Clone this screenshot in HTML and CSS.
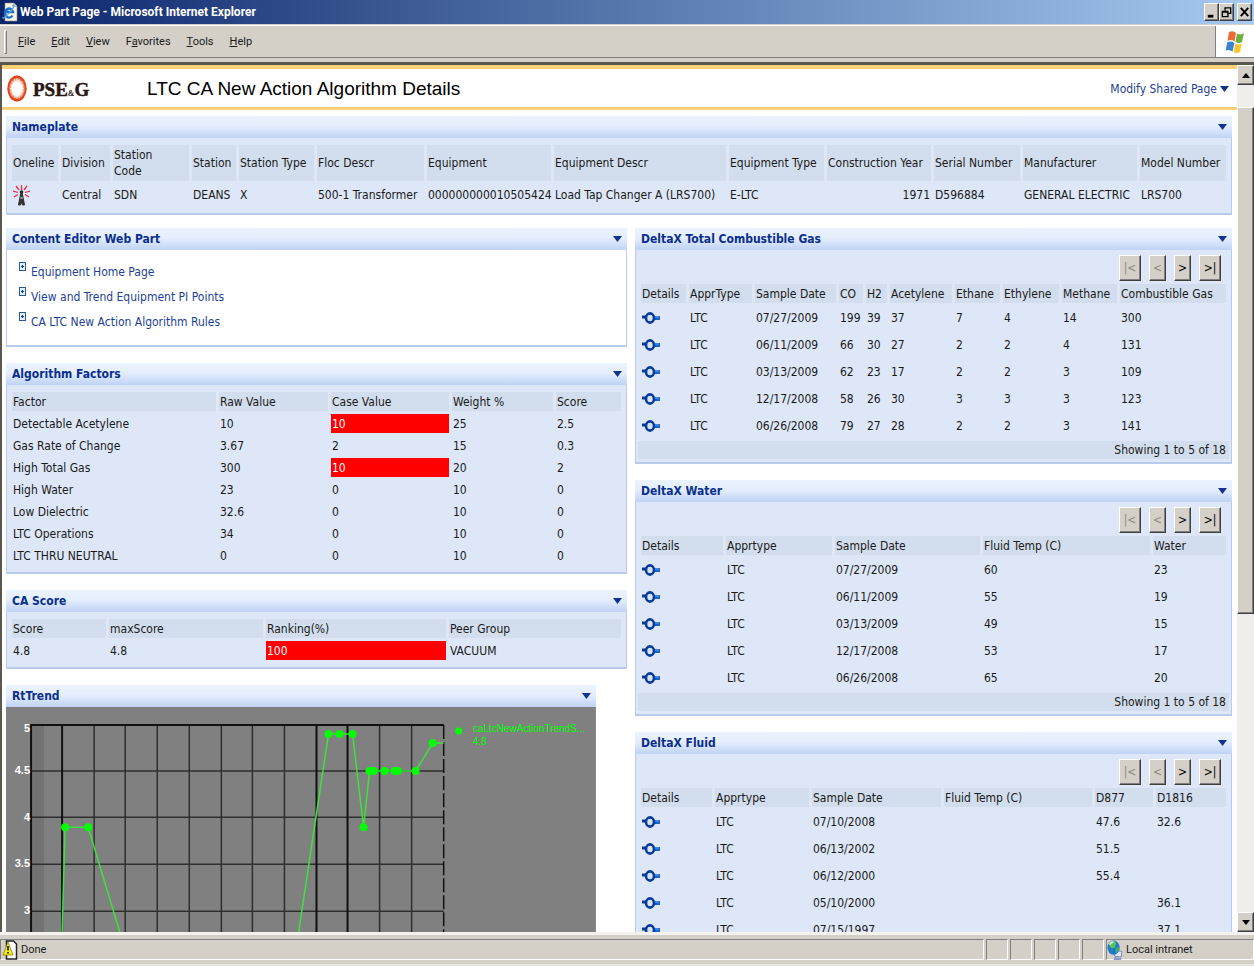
FILE: index.html
```html
<!DOCTYPE html>
<html lang="en">
<head>
<meta charset="utf-8">
<title>Web Part Page - Microsoft Internet Explorer</title>
<link rel="stylesheet" href="styles.css">
</head>
<body>
<svg class="defs" aria-hidden="true">
  <symbol id="plug" viewBox="0 0 18 14">
    <path d="M0 6h4" stroke="#0a3a98" stroke-width="3"/>
    <path d="M12 7h6" stroke="#1c62c8" stroke-width="4"/>
    <ellipse cx="8" cy="7" rx="4" ry="4.600" fill="#d3e4fb" stroke="#0a3a98" stroke-width="2.600"/>
    <path d="M13 6h4" stroke="#6aa6ee" stroke-width="1"/>
  </symbol>
  <symbol id="bullet" viewBox="0 0 7 9">
    <rect x=".5" y=".5" width="6" height="8" fill="#e6f1fb" stroke="#2a5a94"/>
    <path d="M2 4.500h3M3.500 3v3" stroke="#123f86" stroke-width="1.200"/>
  </symbol>
</svg>

<header class="titlebar">
  <svg class="titlebar-icon" viewBox="0 0 16 20" aria-hidden="true">
    <path d="M3 1h9l3 3v15H3z" fill="#f7f5e6" stroke="#8c8c80" stroke-width=".6"/>
    <path d="M12 1v3h3" fill="none" stroke="#8c8c80" stroke-width=".8"/>
    <path d="M10.500 13.500A4 4.500 0 1 1 11 10H3.500" fill="none" stroke="#1c6fd0" stroke-width="2.400"/>
    <path d="M1 15C0 18 5 14 9 9s4-7 1-5" fill="none" stroke="#4fb0ee" stroke-width="1.200"/>
  </svg>
  <h1 class="titlebar-text">Web Part Page - Microsoft Internet Explorer</h1>
  <div class="window-buttons">
    <button class="win-btn" aria-label="Minimize"><svg viewBox="0 0 14 17"><path d="M3 13h6" stroke="#000" stroke-width="3"/></svg></button>
    <button class="win-btn" aria-label="Restore"><svg viewBox="0 0 14 17"><path d="M5.500 7V4h6v6H9M5 4h7M2.500 8.500h6v5h-6zM2 8h7" fill="none" stroke="#000" stroke-width="1.500"/></svg></button>
    <button class="win-btn win-close" aria-label="Close"><svg viewBox="0 0 14 17"><path d="M3 4l8 9M11 4l-8 9" stroke="#000" stroke-width="2"/></svg></button>
  </div>
</header>

<nav class="menubar">
  <span class="grip"></span>
  <button class="menu"><u>F</u>ile</button>
  <button class="menu"><u>E</u>dit</button>
  <button class="menu"><u>V</u>iew</button>
  <button class="menu">F<u>a</u>vorites</button>
  <button class="menu"><u>T</u>ools</button>
  <button class="menu"><u>H</u>elp</button>
  <span class="throbber">
    <svg viewBox="0 0 20 24" aria-hidden="true">
      <path d="M4 2q4-2 7 1L9.500 11.500Q6 9 2.500 11z" fill="#ee6a35"/>
      <path d="M12 3.500q4 2 7-.5L17 12q-3.500 2-6.500 0z" fill="#6cb33e"/>
      <path d="M2.300 12.200Q6 10.500 9.300 13L7.700 21.500Q4 19 .500 20.500z" fill="#3b82d0"/>
      <path d="M10.300 13.500q3 2 6.500 0L15 22q-3.500 2-6.300 0z" fill="#f8c52c"/>
    </svg>
  </span>
</nav>

<div class="viewport">
  <div class="page">
    <div class="masthead">
      <svg class="logo" viewBox="0 0 86 32" role="img" aria-label="PSE&amp;G">
        <defs>
          <radialGradient id="sun">
            <stop offset="0" stop-color="#fff"/>
            <stop offset=".5" stop-color="#fff"/>
            <stop offset=".75" stop-color="#f0835e"/>
            <stop offset=".85" stop-color="#e2481f"/>
            <stop offset="1" stop-color="#dc3c14"/>
          </radialGradient>
        </defs>
        <ellipse cx="10" cy="15.500" rx="9.700" ry="13" fill="url(#sun)"/>
        <path d="M10 5v21M3 15.500h14M5 8.500l10 14M15 8.500l-10 14M7.500 6l5 19M12.500 6l-5 19M3.500 12l13 7M16.500 12l-13 7" stroke="#fff" stroke-width=".9" stroke-opacity=".8"/>
        <text x="26" y="23" class="logo-text">PSE<tspan class="logo-amp">&amp;</tspan>G</text>
      </svg>
      <h2 class="page-title">LTC CA New Action Algorithm Details</h2>
      <a class="modify" href="#">Modify Shared Page <span class="caret"></span></a>
    </div>

    <main class="zones">
      <section class="part">
        <div class="part-head"><h3>Nameplate</h3><button class="caret" aria-label="Nameplate menu"></button></div>
        <div class="part-body">
          <table class="grid nameplate">
            <thead><tr><th>Oneline</th><th>Division</th><th>Station Code</th><th>Station</th><th>Station Type</th><th>Floc Descr</th><th>Equipment</th><th>Equipment Descr</th><th>Equipment Type</th><th>Construction Year</th><th>Serial Number</th><th>Manufacturer</th><th>Model Number</th></tr></thead>
            <tbody><tr>
              <td><a href="#" aria-label="Oneline"><svg class="tower" viewBox="0 0 17 22">
                <path d="M8.500 6V1M6 6L3 2M11 6l3-4M5 8.500L0 7M12 8.500L17 7M5 10.500L1 13M12 10.500l4 2.500" stroke="#e0304a" stroke-width="1.300"/>
                <circle cx="8.500" cy="8" r="1.800" fill="#222"/>
                <path d="M8 8h1L11.500 21h-2l-1-3-1 3h-2z" fill="#333" stroke="#333"/>
                <path d="M7.500 13l2 2M9.500 13l-2 2" stroke="#ddd" stroke-width=".8"/>
              </svg></a></td>
              <td>Central</td><td>SDN</td><td>DEANS</td><td>X</td><td>500-1 Transformer</td><td>000000000010505424</td><td>Load Tap Changer A (LRS700)</td><td>E-LTC</td><td class="num">1971</td><td>D596884</td><td>GENERAL ELECTRIC</td><td>LRS700</td>
            </tr></tbody>
          </table>
        </div>
      </section>

      <div class="columns">
        <div class="col-left">
          <section class="part">
            <div class="part-head"><h3>Content Editor Web Part</h3><button class="caret" aria-label="Content Editor menu"></button></div>
            <div class="part-body plain">
              <ul class="links">
                <li><svg class="bullet"><use href="#bullet"/></svg><a href="#">Equipment Home Page</a></li>
                <li><svg class="bullet"><use href="#bullet"/></svg><a href="#">View and Trend Equipment PI Points</a></li>
                <li><svg class="bullet"><use href="#bullet"/></svg><a href="#">CA LTC New Action Algorithm Rules</a></li>
              </ul>
            </div>
          </section>

          <section class="part">
            <div class="part-head"><h3>Algorithm Factors</h3><button class="caret" aria-label="Algorithm Factors menu"></button></div>
            <div class="part-body">
              <table class="grid factors">
                <thead><tr><th>Factor</th><th>Raw Value</th><th>Case Value</th><th>Weight %</th><th>Score</th></tr></thead>
                <tbody>
                  <tr><td>Detectable Acetylene</td><td>10</td><td class="alert">10</td><td>25</td><td>2.5</td></tr>
                  <tr><td>Gas Rate of Change</td><td>3.67</td><td>2</td><td>15</td><td>0.3</td></tr>
                  <tr><td>High Total Gas</td><td>300</td><td class="alert">10</td><td>20</td><td>2</td></tr>
                  <tr><td>High Water</td><td>23</td><td>0</td><td>10</td><td>0</td></tr>
                  <tr><td>Low Dielectric</td><td>32.6</td><td>0</td><td>10</td><td>0</td></tr>
                  <tr><td>LTC Operations</td><td>34</td><td>0</td><td>10</td><td>0</td></tr>
                  <tr><td>LTC THRU NEUTRAL</td><td>0</td><td>0</td><td>10</td><td>0</td></tr>
                </tbody>
              </table>
            </div>
          </section>

          <section class="part">
            <div class="part-head"><h3>CA Score</h3><button class="caret" aria-label="CA Score menu"></button></div>
            <div class="part-body">
              <table class="grid score">
                <thead><tr><th>Score</th><th>maxScore</th><th>Ranking(%)</th><th>Peer Group</th></tr></thead>
                <tbody><tr><td>4.8</td><td>4.8</td><td class="alert">100</td><td>VACUUM</td></tr></tbody>
              </table>
            </div>
          </section>

          <section class="part trend">
            <div class="part-head"><h3>RtTrend</h3><button class="caret" aria-label="RtTrend menu"></button></div>
            <svg class="chart" viewBox="0 0 589 330" role="img" aria-label="caLtcNewActionTrendScore over time">
              <rect width="589" height="330" fill="#808080"/>
              <rect x="25" y="18" width="13" height="312" fill="#727272"/>
              <path d="M88 18v312M119 18v312M151 18v312M183 18v312M215 18v312M246 18v312M278 18v312M373 18v312M405 18v312M25 64h412M25 110h412M25 157h412M25 204h412M25 250h412M25 297h412" stroke="#2e2e2e" stroke-width="1.500" fill="none"/>
              <path d="M56 18v312M310 18v312M341 18v312M25 330V18h412" stroke="#111" stroke-width="2" fill="none"/>
              <path d="M437 18v312" stroke="#111" stroke-width="1.500" stroke-dasharray="14 3"/>
              <path d="M55 330l1-104L59 120h23l32 106 M292 226L322 27h24L357 120 363 64h46L426 36h11" stroke="#3be33b" stroke-width="1.500" fill="none"/>
              <g fill="#00ff00">
                <circle cx="59" cy="120" r="4"/><circle cx="82" cy="120" r="4"/>
                <circle cx="322" cy="27" r="4"/><circle cx="333" cy="27" r="4"/><circle cx="346" cy="27" r="4"/>
                <circle cx="357" cy="120" r="4"/><circle cx="363" cy="64" r="4"/><circle cx="367" cy="64" r="4"/>
                <circle cx="378" cy="64" r="4"/><circle cx="388" cy="64" r="4"/><circle cx="391" cy="64" r="4"/>
                <circle cx="409" cy="64" r="4"/><circle cx="426" cy="36" r="4"/><circle cx="452" cy="24" r="3.500"/>
              </g>
              <g class="axis">
                <text x="24" y="25">5</text><text x="24" y="67">4.5</text><text x="24" y="114">4</text><text x="24" y="160">3.5</text><text x="24" y="207">3</text>
              </g>
              <g class="legend">
                <text x="466" y="25">caLtcNewActionTrendS...</text><text x="466" y="38">4.8</text>
              </g>
            </svg>
          </section>
        </div>

        <div class="col-right">
          <section class="part">
            <div class="part-head"><h3>DeltaX Total Combustible Gas</h3><button class="caret" aria-label="Total Combustible Gas menu"></button></div>
            <div class="part-body paged">
              <div class="pager"><button disabled class="wide">|&lt;</button><button disabled>&lt;</button><button>&gt;</button><button class="wide">&gt;|</button></div>
              <table class="grid tall gas">
                <thead><tr><th>Details</th><th>ApprType</th><th>Sample Date</th><th>CO</th><th>H2</th><th>Acetylene</th><th>Ethane</th><th>Ethylene</th><th>Methane</th><th>Combustible Gas</th></tr></thead>
                <tbody>
                  <tr><td><a href="#" aria-label="Details"><svg class="plug"><use href="#plug"/></svg></a></td><td>LTC</td><td>07/27/2009</td><td>199</td><td>39</td><td>37</td><td>7</td><td>4</td><td>14</td><td>300</td></tr>
                  <tr><td><a href="#" aria-label="Details"><svg class="plug"><use href="#plug"/></svg></a></td><td>LTC</td><td>06/11/2009</td><td>66</td><td>30</td><td>27</td><td>2</td><td>2</td><td>4</td><td>131</td></tr>
                  <tr><td><a href="#" aria-label="Details"><svg class="plug"><use href="#plug"/></svg></a></td><td>LTC</td><td>03/13/2009</td><td>62</td><td>23</td><td>17</td><td>2</td><td>2</td><td>3</td><td>109</td></tr>
                  <tr><td><a href="#" aria-label="Details"><svg class="plug"><use href="#plug"/></svg></a></td><td>LTC</td><td>12/17/2008</td><td>58</td><td>26</td><td>30</td><td>3</td><td>3</td><td>3</td><td>123</td></tr>
                  <tr><td><a href="#" aria-label="Details"><svg class="plug"><use href="#plug"/></svg></a></td><td>LTC</td><td>06/26/2008</td><td>79</td><td>27</td><td>28</td><td>2</td><td>2</td><td>3</td><td>141</td></tr>
                </tbody>
              </table>
              <p class="showing">Showing 1 to 5 of 18</p>
            </div>
          </section>

          <section class="part">
            <div class="part-head"><h3>DeltaX Water</h3><button class="caret" aria-label="Water menu"></button></div>
            <div class="part-body paged">
              <div class="pager"><button disabled class="wide">|&lt;</button><button disabled>&lt;</button><button>&gt;</button><button class="wide">&gt;|</button></div>
              <table class="grid tall water">
                <thead><tr><th>Details</th><th>Apprtype</th><th>Sample Date</th><th>Fluid Temp (C)</th><th>Water</th></tr></thead>
                <tbody>
                  <tr><td><a href="#" aria-label="Details"><svg class="plug"><use href="#plug"/></svg></a></td><td>LTC</td><td>07/27/2009</td><td>60</td><td>23</td></tr>
                  <tr><td><a href="#" aria-label="Details"><svg class="plug"><use href="#plug"/></svg></a></td><td>LTC</td><td>06/11/2009</td><td>55</td><td>19</td></tr>
                  <tr><td><a href="#" aria-label="Details"><svg class="plug"><use href="#plug"/></svg></a></td><td>LTC</td><td>03/13/2009</td><td>49</td><td>15</td></tr>
                  <tr><td><a href="#" aria-label="Details"><svg class="plug"><use href="#plug"/></svg></a></td><td>LTC</td><td>12/17/2008</td><td>53</td><td>17</td></tr>
                  <tr><td><a href="#" aria-label="Details"><svg class="plug"><use href="#plug"/></svg></a></td><td>LTC</td><td>06/26/2008</td><td>65</td><td>20</td></tr>
                </tbody>
              </table>
              <p class="showing">Showing 1 to 5 of 18</p>
            </div>
          </section>

          <section class="part">
            <div class="part-head"><h3>DeltaX Fluid</h3><button class="caret" aria-label="Fluid menu"></button></div>
            <div class="part-body paged">
              <div class="pager"><button disabled class="wide">|&lt;</button><button disabled>&lt;</button><button>&gt;</button><button class="wide">&gt;|</button></div>
              <table class="grid tall fluid">
                <thead><tr><th>Details</th><th>Apprtype</th><th>Sample Date</th><th>Fluid Temp (C)</th><th>D877</th><th>D1816</th></tr></thead>
                <tbody>
                  <tr><td><a href="#" aria-label="Details"><svg class="plug"><use href="#plug"/></svg></a></td><td>LTC</td><td>07/10/2008</td><td></td><td>47.6</td><td>32.6</td></tr>
                  <tr><td><a href="#" aria-label="Details"><svg class="plug"><use href="#plug"/></svg></a></td><td>LTC</td><td>06/13/2002</td><td></td><td>51.5</td><td></td></tr>
                  <tr><td><a href="#" aria-label="Details"><svg class="plug"><use href="#plug"/></svg></a></td><td>LTC</td><td>06/12/2000</td><td></td><td>55.4</td><td></td></tr>
                  <tr><td><a href="#" aria-label="Details"><svg class="plug"><use href="#plug"/></svg></a></td><td>LTC</td><td>05/10/2000</td><td></td><td></td><td>36.1</td></tr>
                  <tr><td><a href="#" aria-label="Details"><svg class="plug"><use href="#plug"/></svg></a></td><td>LTC</td><td>07/15/1997</td><td></td><td></td><td>37.1</td></tr>
                </tbody>
              </table>
            </div>
          </section>
        </div>
      </div>
    </main>
  </div>

  <div class="scrollbar">
    <button class="scroll-btn" aria-label="Scroll up"><svg viewBox="0 0 10 6"><path d="M0 6l5-6 5 6z"/></svg></button>
    <div class="track"><div class="thumb"></div></div>
    <button class="scroll-btn" aria-label="Scroll down"><svg viewBox="0 0 10 6"><path d="M0 0l5 6 5-6z"/></svg></button>
  </div>
</div>

<footer class="statusbar">
  <div class="status-main">
    <svg class="status-icon" viewBox="0 0 15 20" aria-hidden="true">
      <path d="M4 1h7l3 3v15H4z" fill="#fff" stroke="#222" stroke-width="1.500"/>
      <path d="M5.500 2L0.500 15h10z" fill="#f6ee1e" stroke="#8a8200" stroke-width=".8"/>
      <path d="M5.500 6v4.500M5.500 12v1.500" stroke="#111" stroke-width="1.600"/>
    </svg>
    <span>Done</span>
  </div>
  <div class="status-cell"></div><div class="status-cell"></div><div class="status-cell"></div><div class="status-cell"></div><div class="status-cell"></div>
  <div class="status-zone">
    <svg class="status-icon" viewBox="0 0 17 21" aria-hidden="true">
      <path d="M9 11l7 1-1 6-7-1z" fill="#dfe8f4" stroke="#7684b8"/>
      <path d="M8 18l7 1v2H7z" fill="#8f97cf"/>
      <ellipse cx="7" cy="8" rx="6.500" ry="7.500" fill="#1f78cf"/>
      <path d="M2 3q5-4 8 0L8 8 5 9 3 7z" fill="#57c65c"/>
      <path d="M9 8l4-1q0 5-4 7z" fill="#3fb05a"/>
      <path d="M3 5q1-3 4-3" stroke="#d5f2ff" stroke-width="1.500" fill="none"/>
    </svg>
    <span>Local intranet</span>
  </div>
</footer>
</body>
</html>
```
FILE: styles.css
```css
* { box-sizing: border-box; }

body {
  margin: 0;
  height: 100vh;
  display: flex;
  flex-direction: column;
  overflow: hidden;
  background: #d4d0c8;
  color: #1a1a1a;
  font: 12px/16px "DejaVu Sans Condensed", "DejaVu Sans", sans-serif;
}

h1, h2, h3, p, ul { margin: 0; padding: 0; }
button { padding: 0; font: inherit; color: inherit; border: 0; background: none; }
a { color: #1d3f96; text-decoration: none; }
svg { display: block; }
.defs { display: none; }

/* Window frame */
.titlebar {
  flex: none;
  height: 24px;
  display: flex;
  align-items: center;
  padding: 0 2px;
  background: linear-gradient(90deg, #0a246a, #a6caf0);
}
.titlebar-icon { width: 16px; height: 20px; }
.titlebar-text {
  flex: 1;
  padding-left: 2px;
  color: #fff;
  font: bold 12px/20px Roboto, sans-serif;
}
.window-buttons { display: flex; }
.win-btn, .scroll-btn, .pager button {
  background: #d4d0c8;
  border: 1px solid;
  border-color: #fff #404040 #404040 #fff;
  box-shadow: inset -1px -1px #808080;
}
.win-btn { width: 15px; height: 18px; }
.win-btn svg { width: 13px; height: 16px; }
.win-close { margin-left: 3px; }

.menubar {
  flex: none;
  height: 33px;
  display: flex;
  align-items: center;
  margin-top: 1px;
  border-top: 1px solid #fff;
  border-bottom: 1px solid #808080;
  font: 11px/16px Roboto, sans-serif;
}
.grip { width: 3px; height: 24px; margin: 0 11px 0 4px; border: 1px solid; border-color: #fff #808080 #808080 #fff; }
.menu { margin-right: 16px; }
.throbber {
  align-self: stretch;
  width: 39px;
  margin-left: auto;
  display: grid;
  place-items: center;
  background: #fff;
  border-left: 1px solid #808080;
}
.throbber svg { width: 20px; height: 24px; }

.viewport {
  flex: 1;
  min-height: 0;
  display: flex;
  margin-top: 4px;
  border-top: 3px solid #5a5650;
  border-left: 2px solid #5a5650;
}
.page { flex: 1; min-width: 0; overflow: hidden; background: #fff; }

/* Page header */
.masthead {
  height: 45px;
  display: flex;
  align-items: center;
  padding: 2px 8px 0 5px;
  border-top: 4px solid #fdd078;
  border-bottom: 3px solid #fdd078;
}
.logo { width: 86px; height: 32px; }
.logo-text { font: bold 19px "Liberation Serif", serif; fill: #2b1712; stroke: #2b1712; stroke-width: .5; }
.logo-amp { font-size: 8px; stroke-width: 0; }
.page-title {
  flex: 1;
  margin-left: 54px;
  color: #000;
  font: 19px/32px "Liberation Sans", sans-serif;
}
.modify { display: flex; align-items: center; gap: 3px; }
.caret {
  flex: none;
  width: 9px;
  height: 6px;
  background: #12328c;
  clip-path: polygon(0 0, 100% 0, 50% 100%);
}

/* Web parts */
.zones { display: flex; flex-direction: column; gap: 13px; padding: 6px 5px 0 4px; }
.columns { display: flex; align-items: flex-start; gap: 8px; }
.col-left { flex: 621; min-width: 0; display: flex; flex-direction: column; gap: 16px; }
.col-right { flex: 597; min-width: 0; display: flex; flex-direction: column; gap: 16px; }
.part-head {
  height: 22px;
  display: flex;
  align-items: center;
  justify-content: space-between;
  padding: 0 5px 0 6px;
  background: linear-gradient(#eaf3fe 0%, #e4eefd 45%, #bfd3f6 100%);
}
.part-head h3 { color: #0b2f8e; font: bold 12px/16px "DejaVu Sans Condensed", "DejaVu Sans", sans-serif; }
.part-body {
  padding: 4px 2px;
  background: #dde7f7;
  border: 1px solid #b9cbea;
  border-top: 0;
  border-bottom-width: 2px;
}
.part-body.plain { background: #fff; padding: 9px 12px 11px; }
.part-body.paged { padding: 5px 2px 3px; }

.links { list-style: none; display: flex; flex-direction: column; }
.links li { display: flex; gap: 5px; height: 25px; align-items: center; }
.bullet { width: 7px; height: 9px; margin-bottom: 10px; }

.grid { width: 100%; table-layout: fixed; border-collapse: separate; border-spacing: 3px; }
.grid th, .grid td { height: 19px; padding: 0 1px; text-align: left; font-weight: normal; white-space: nowrap; }
.grid th { background: #d2deed; }
.grid .num { text-align: right; }
.grid .alert { background: #f00; color: #fff; }
.grid.tall td { height: 24px; }
.plug { width: 18px; height: 14px; }

.grid.nameplate th { height: 36px; white-space: normal; }
.grid.nameplate td { height: 22px; }
.tower { width: 17px; height: 22px; }
.nameplate th:nth-child(1) { width: 46px; }
.nameplate th:nth-child(2) { width: 49px; }
.nameplate th:nth-child(3) { width: 76px; padding-right: 28px; }
.nameplate th:nth-child(4) { width: 44px; }
.nameplate th:nth-child(5) { width: 75px; }
.nameplate th:nth-child(6) { width: 107px; }
.nameplate th:nth-child(7) { width: 124px; }
.nameplate th:nth-child(8) { width: 172px; }
.nameplate th:nth-child(9) { width: 95px; }
.nameplate th:nth-child(10) { width: 104px; }
.nameplate th:nth-child(11) { width: 86px; }
.nameplate th:nth-child(12) { width: 114px; }
.nameplate th:nth-child(13) { width: 86px; }

.factors th:nth-child(1) { width: 204px; }
.factors th:nth-child(2) { width: 109px; }
.factors th:nth-child(3) { width: 118px; }
.factors th:nth-child(4) { width: 101px; }
.factors th:nth-child(5) { width: 65px; }

.score th:nth-child(1) { width: 94px; }
.score th:nth-child(2) { width: 154px; }
.score th:nth-child(3) { width: 180px; }
.score th:nth-child(4) { width: 172px; }

.gas th:nth-child(1) { width: 45px; }
.gas th:nth-child(2) { width: 63px; }
.gas th:nth-child(3) { width: 81px; }
.gas th:nth-child(4) { width: 24px; }
.gas th:nth-child(5) { width: 21px; }
.gas th:nth-child(6) { width: 62px; }
.gas th:nth-child(7) { width: 45px; }
.gas th:nth-child(8) { width: 56px; }
.gas th:nth-child(9) { width: 55px; }
.gas th:nth-child(10) { width: 106px; }

.water th:nth-child(1) { width: 82px; }
.water th:nth-child(2) { width: 106px; }
.water th:nth-child(3) { width: 145px; }
.water th:nth-child(4) { width: 167px; }
.water th:nth-child(5) { width: 73px; }

.fluid th:nth-child(1) { width: 71px; }
.fluid th:nth-child(2) { width: 94px; }
.fluid th:nth-child(3) { width: 129px; }
.fluid th:nth-child(4) { width: 148px; }
.fluid th:nth-child(5) { width: 58px; }
.fluid th:nth-child(6) { width: 70px; }

.pager { display: flex; justify-content: flex-end; gap: 8px; padding-right: 8px; }
.pager button { width: 17px; height: 26px; color: #000; }
.pager .wide { width: 22px; }
.pager button:disabled { color: #8c8880; }
.showing { padding: 1px 3px; text-align: right; background: #d2deed; }

.trend { width: 95%; }
.chart { width: 100%; }
.axis { font: bold 11px "Liberation Sans", sans-serif; fill: #fff; text-anchor: end; }
.legend { font: 10px "Liberation Sans", sans-serif; fill: #00ff00; }

/* Scrollbar */
.scrollbar { flex: none; width: 17px; display: flex; flex-direction: column; background: #f0eeea; }
.scroll-btn { height: 20px; display: grid; place-items: center; }
.scroll-btn svg { width: 8px; height: 5px; }
.track { flex: 1; padding-top: 22px; }
.thumb {
  height: 63%;
  background: #d4d0c8;
  border: 1px solid;
  border-color: #fff #404040 #404040 #fff;
  box-shadow: inset -1px -1px #808080;
}

/* Status bar */
.statusbar {
  flex: none;
  height: 34px;
  display: flex;
  gap: 2px;
  padding: 4px 0;
  border-top: 3px solid #f4f2ee;
  border-bottom: 2px solid #e8e6e0;
  font: 11px/16px Roboto, sans-serif;
}
.status-main, .status-cell, .status-zone {
  display: flex;
  align-items: center;
  gap: 3px;
  border: 1px solid;
  border-color: #808080 #fff #fff #808080;
}
.status-main { flex: 1; padding-left: 1px; }
.status-cell { width: 22px; }
.status-zone { width: 148px; }
.status-icon { width: 16px; height: 20px; }
```
